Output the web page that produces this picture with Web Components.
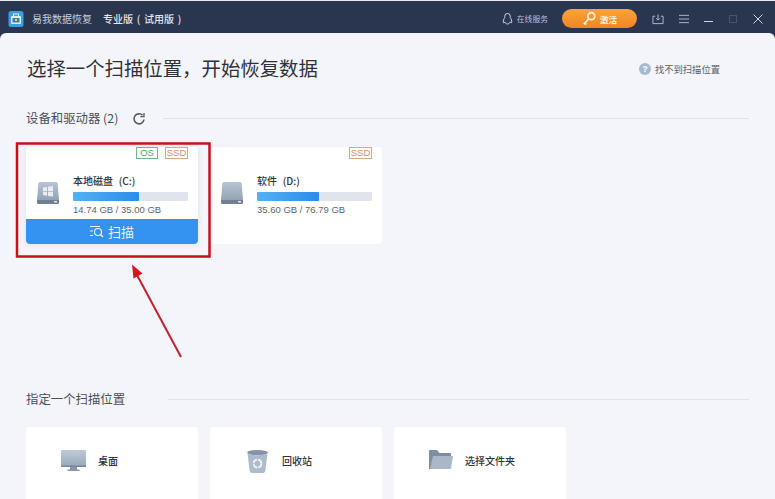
<!DOCTYPE html>
<html lang="zh">
<head>
<meta charset="utf-8">
<title>易我数据恢复</title>
<style>
    html, body { margin: 0; height: 100%; overflow: hidden; background: #f4f5fa; }
    body { font-family: "Noto Sans CJK SC", "Liberation Sans", sans-serif; }
</style>
</head>
<body>

<app-window>
    <title-bar slot="bar"></title-bar>

    <page-head>选择一个扫描位置，开始恢复数据</page-head>

    <section-head style="--top:27px;--rule:17px">设备和驱动器 (2)<refresh-icon slot="extra"></refresh-icon></section-head>
    <card-row style="--top:20px;--height:97px">
        <drive-card name="本地磁盘 (C:)" used="14.74 GB / 35.00 GB" percent="57" os scan></drive-card>
        <drive-card name="软件 (D:)" used="35.60 GB / 76.79 GB" percent="54"></drive-card>
    </card-row>

    <section-head style="--top:146px;--rule:43px">指定一个扫描位置</section-head>
    <card-row style="--top:19px;--height:90px">
        <place-card kind="desktop">桌面</place-card>
        <place-card kind="bin">回收站</place-card>
        <place-card kind="folder" style="--pad:34px">选择文件夹</place-card>
    </card-row>

    <red-callout slot="over"></red-callout>
</app-window>

<script>
const app_window = document.createElement('template');
app_window.innerHTML = `
    <style>
        :host{
            display:block;
            position:relative;
            width:775px;
            height:499px;
            overflow:hidden;
            background:#2a3550;
            border-top:1px solid #e8eaf0;
            box-sizing:border-box;
        }
        .panel{
            height:466px;
            box-sizing:border-box;
            padding:19px 26px 0;
            background:#f4f5fa;
            border-radius:6px 6px 0 0;
        }
    </style>
    <slot name="bar"></slot>
    <div class="panel"><slot></slot></div>
    <slot name="over"></slot>
`;

class AppWindow extends HTMLElement {
    constructor() {
        super();
        this.attachShadow({ mode: 'open' });
        this.shadowRoot.appendChild(app_window.content.cloneNode(true));
    }
}

const title_bar = document.createElement('template');
title_bar.innerHTML = `
    <style>
        :host{
            display:flex;
            align-items:center;
            height:32px;
            box-sizing:border-box;
            padding:3px 12px 0 8px;
            color:#c9ced9;
            font-size:10px;
            background:#2a3550;
        }
        .logo{ width:16px; height:16px; margin-right:8px; }
        .name{ width:71px; white-space:nowrap; }
        .edition{ color:#e3e6ec; font-weight:500; white-space:nowrap; word-spacing:1.500px; }
        .space{ flex:1; }
        .service{ display:flex; align-items:center; gap:4px; margin-right:14px; font-size:7.800px; color:#b9bfcc; }
        .activate{
            display:flex;
            align-items:center;
            gap:4px;
            width:75px;
            height:19px;
            box-sizing:border-box;
            padding-left:20px;
            margin-right:15px;
            border-radius:10px;
            background:linear-gradient(#fba43c,#f08423);
            color:#fff3e2;
            font-size:8.500px;
            font-weight:700;
        }
        .tools{ display:flex; align-items:center; gap:15px; }
        svg{ display:block; }
    </style>
    <svg class="logo" viewBox="0 0 15 16">
        <rect width="15" height="16" rx="2.5" fill="#3a9ee0"/>
        <rect x="2.5" y="5" width="10" height="8" rx="1" fill="#d8ecf4"/>
        <rect x="5" y="3" width="5" height="2.5" fill="none" stroke="#d8ecf4"/>
        <rect x="4" y="7" width="7" height="4.5" fill="#3f7f9c"/>
        <rect x="6.5" y="8" width="2" height="2" fill="#e8d36a"/>
    </svg>
    <span class="name">易我数据恢复</span>
    <span class="edition">专业版 ( 试用版 )</span>
    <span class="space"></span>
    <span class="service">
        <svg width="11" height="13" viewBox="0 0 12 14" fill="none" stroke="#dfe3ea">
            <path d="M3 6V4.500a3 3 0 0 1 6 0V6c1 1.500 2 3.500 1.500 5.500-.6.500-1.300-.1-1.800-.8C8.500 12 7.300 13 6 13s-2.500-1-2.700-2.300c-.5.700-1.200 1.300-1.800.8C1 9.500 2 7.500 3 6z"/>
        </svg>
        在线服务
    </span>
    <span class="activate">
        <svg width="14" height="15" viewBox="0 0 12 13" fill="none" stroke="#fff4e0" stroke-width="1.500">
            <circle cx="8" cy="4.500" r="3"/>
            <path d="M5.800 6.700 1.500 11.500M2.500 10.500l1.200 1.200"/>
        </svg>
        激活
    </span>
    <span class="tools">
        <svg width="12" height="12" viewBox="0 0 13 13" fill="none" stroke="#b9bfcc">
            <path d="M3.500 3.500H1v8h11v-8H9.500M6.500 1.500v6M4.500 5.700l2 2 2-2"/>
        </svg>
        <svg width="10" height="10" viewBox="0 0 11 11" fill="none" stroke="#b9bfcc">
            <path d="M0 1.500h11M0 5.500h11M0 9.500h11"/>
        </svg>
        <svg width="9" height="11" viewBox="0 0 9 11" fill="none" stroke="#cfd3dc">
            <path d="M0 8.500h9"/>
        </svg>
        <svg style="margin-left:1px" width="8" height="8" viewBox="0 0 8 8" fill="none" stroke="#465270">
            <rect x=".5" y=".5" width="7" height="7"/>
        </svg>
        <svg style="margin-left:1px" width="10" height="10" viewBox="0 0 10 10" fill="none" stroke="#cfd3dc">
            <path d="M.5.500l9 9M9.500.500l-9 9"/>
        </svg>
    </span>
`;

class TitleBar extends HTMLElement {
    constructor() {
        super();
        this.attachShadow({ mode: 'open' });
        this.shadowRoot.appendChild(title_bar.content.cloneNode(true));
    }
}

const page_head = document.createElement('template');
page_head.innerHTML = `
    <style>
        :host{
            display:flex;
            align-items:center;
            justify-content:space-between;
            height:30px;
            padding-left:1px;
            color:#2e3238;
        }
        .title{ font-size:19.400px; white-space:nowrap; }
        .help{
            display:flex;
            align-items:center;
            gap:4px;
            margin:4px 29px 0 0;
            font-size:9.300px;
            color:#5b6068;
        }
        .mark{
            width:12px;
            height:12px;
            border-radius:50%;
            background:#a9b9cc;
            color:#fff;
            font:700 9px/12px "Liberation Sans", sans-serif;
            text-align:center;
        }
    </style>
    <span class="title"><slot></slot></span>
    <span class="help"><span class="mark">?</span>找不到扫描位置</span>
`;

class PageHead extends HTMLElement {
    constructor() {
        super();
        this.attachShadow({ mode: 'open' });
        this.shadowRoot.appendChild(page_head.content.cloneNode(true));
    }
}

const section_head = document.createElement('template');
section_head.innerHTML = `
    <style>
        :host{
            display:flex;
            align-items:center;
            height:18px;
            margin-top:var(--top,0);
            font-size:12.400px;
            color:#4b4f56;
            white-space:nowrap;
        }
        .rule{ flex:1; height:1px; margin:1px 0 0 var(--rule,15px); background:#dfe2ea; }
    </style>
    <slot></slot>
    <slot name="extra"></slot>
    <span class="rule"></span>
`;

class SectionHead extends HTMLElement {
    constructor() {
        super();
        this.attachShadow({ mode: 'open' });
        this.shadowRoot.appendChild(section_head.content.cloneNode(true));
    }
}

class RefreshIcon extends HTMLElement {
    constructor() {
        super();
        this.attachShadow({ mode: 'open' });
        this.shadowRoot.innerHTML = `
            <style>
                :host{ display:block; margin:1px 0 0 14px; height:14px; }
            </style>
            <svg width="14" height="14" viewBox="0 0 14 14" fill="none" stroke="#555a62" stroke-width="1.600">
                <path d="M12 7.500A5 5 0 1 1 10.500 3.200"/>
                <path d="M12 1v3.600H8.400" stroke-width="1.300"/>
            </svg>
        `;
    }
}

const card_row = document.createElement('template');
card_row.innerHTML = `
    <style>
        :host{
            display:grid;
            grid-template-columns:repeat(3,172px);
            gap:12px;
            margin-top:var(--top,0);
            height:var(--height,90px);
        }
    </style>
    <slot></slot>
`;

class CardRow extends HTMLElement {
    constructor() {
        super();
        this.attachShadow({ mode: 'open' });
        this.shadowRoot.appendChild(card_row.content.cloneNode(true));
    }
}

const drive_card = document.createElement('template');
drive_card.innerHTML = `
    <style>
        :host{
            display:flex;
            flex-direction:column;
            background:#fff;
            border-radius:4px;
            overflow:hidden;
            color:#2e3238;
        }
        :host([scan]){ box-shadow:0 0 6px rgba(170,185,220,.35); }
        .tags{
            display:flex;
            justify-content:flex-end;
            gap:7px;
            height:12px;
            padding-right:10px;
            font:9.500px/10px "Liberation Sans", sans-serif;
        }
        .tag{ box-sizing:border-box; height:12px; border:1px solid; text-align:center; }
        .os{ width:22px; color:#4fa06c; border-color:#6fb588; }
        .ssd{ width:23px; color:#d08a6a; border-color:#d9a68c; }
        .body{
            flex:1;
            display:flex;
            align-items:flex-start;
            padding:15px 10px 0 11px;
        }
        .disk{ display:block; margin-top:8px; margin-right:14px; flex:none; }
        .info{ flex:1; }
        .name{ font-size:10px; line-height:14px; font-weight:500; white-space:nowrap; word-spacing:3.500px; }
        .bar{ height:9px; margin-top:4px; background:#e0e4ec; overflow:hidden; border-radius:1px; }
        .fill{ height:100%; background:linear-gradient(90deg,#55b1f2,#2c8cea); border-radius:1px; }
        .used{ margin-top:2px; font:9.500px/13px "Liberation Sans", "Noto Sans", sans-serif; color:#5f646c; white-space:nowrap; }
        .scan{
            display:none;
            align-items:center;
            justify-content:center;
            gap:4px;
            height:25px;
            box-sizing:border-box;
            padding-bottom:1px;
            background:#3492f0;
            color:#eaf5ff;
            font-size:13px;
        }
        .scan svg{ display:block; }
        :host([scan]) .scan{ display:flex; }
    </style>
    <div class="tags">
        <span class="tag os">OS</span>
        <span class="tag ssd">SSD</span>
    </div>
    <div class="body">
        <svg class="disk" width="22" height="22" viewBox="0 0 22 22">
            <defs>
                <linearGradient id="disk" x1="0" y1="0" x2="0" y2="1">
                    <stop offset="0" stop-color="#b8c4d4"/>
                    <stop offset="1" stop-color="#94a2b5"/>
                </linearGradient>
            </defs>
            <path d="M3 0h16q1.500 0 1.700 1.500L22 18H0L1.300 1.500Q1.500 0 3 0z" fill="url(#disk)"/>
            <path d="M0 18h22v2.500a1.500 1.500 0 0 1-1.500 1.500h-19A1.500 1.500 0 0 1 0 20.500z" fill="#707e92"/>
            <rect x="17" y="19" width="3" height="1.500" fill="#e4e8ee"/>
            <path class="win" d="M6 5.500l4-.6v4H6zM11 4.700l5-.7v4.900h-5zM6 9.700h4v4l-4-.6zM11 9.700h5v4.900l-5-.7z" fill="#e9edf2"/>
        </svg>
        <div class="info">
            <div class="name"></div>
            <div class="bar"><div class="fill"></div></div>
            <div class="used"></div>
        </div>
    </div>
    <div class="scan">
        <svg width="14" height="13" viewBox="0 0 14 13" fill="none" stroke="#eaf5ff" stroke-width="1.200">
            <path d="M0 1.500h10M0 6h3M0 10.500h3"/>
            <circle cx="8" cy="7" r="3.500"/>
            <path d="M10.500 9.500l2.500 2.500"/>
        </svg>
        <span>扫描</span>
    </div>
`;

class DriveCard extends HTMLElement {
    constructor() {
        super();
        this.attachShadow({ mode: 'open' });
        this.shadowRoot.appendChild(drive_card.content.cloneNode(true));
    }

    connectedCallback() {
        var root = this.shadowRoot;
        root.querySelector('.name').textContent = this.getAttribute('name');
        root.querySelector('.used').textContent = this.getAttribute('used');
        root.querySelector('.fill').style.width = this.getAttribute('percent') + '%';
        if (!this.hasAttribute('os')) {
            root.querySelector('.os').style.display = 'none';
            root.querySelector('.win').style.display = 'none';
        }
    }
}

const place_icons = {
    desktop: `<svg width="25" height="21" viewBox="0 0 25 21">
        <defs><linearGradient id="scr" x1="0" y1="0" x2="0" y2="1"><stop offset="0" stop-color="#c0cbd9"/><stop offset="1" stop-color="#98a6b8"/></linearGradient></defs>
        <rect width="25" height="17" rx="1" fill="url(#scr)"/>
        <rect y="15.500" width="25" height="1.500" fill="#77859a"/>
        <path d="M9 17h7v2.500h2.500V21h-12v-1.500H9z" fill="#8a97a9"/>
    </svg>`,
    bin: `<svg width="21" height="23" viewBox="0 0 20 22">
        <ellipse cx="10" cy="2.500" rx="10" ry="2.500" fill="#8493a7"/>
        <path d="M.5 3.500Q10 6.500 19.500 3.500L17.500 20q-.3 2-2.500 2H5q-2.200 0-2.500-2z" fill="#aebbcb"/>
        <circle cx="10" cy="13" r="3.800" fill="none" stroke="#f2f5f8" stroke-width="1.700" stroke-dasharray="5 1"/>
    </svg>`,
    folder: `<svg width="24" height="19" viewBox="0 0 24 19">
        <path d="M0 1q0-1 1-1h7l2.500 3H21q1 0 1 1v2H0z" fill="#7f8da3"/>
        <path d="M0 3h4v16H0z" fill="#7f8da3"/>
        <path d="M4 6h20l-2 12q-.2 1-1 1H1z" fill="#aab7c8"/>
    </svg>`
};

const place_card = document.createElement('template');
place_card.innerHTML = `
    <style>
        :host{
            display:flex;
            align-items:flex-start;
            background:#fff;
            border-radius:4px;
            padding-top:23px;
            padding-left:var(--pad,35px);
            box-sizing:border-box;
            color:#2e3238;
            font-size:10px;
            font-weight:500;
            line-height:22px;
        }
        .icon{ display:flex; justify-content:center; width:25px; margin-right:12px; }
        svg{ display:block; }
    </style>
    <span class="icon"></span>
    <slot></slot>
`;

class PlaceCard extends HTMLElement {
    constructor() {
        super();
        this.attachShadow({ mode: 'open' });
        this.shadowRoot.appendChild(place_card.content.cloneNode(true));
    }

    connectedCallback() {
        this.shadowRoot.querySelector('.icon').innerHTML = place_icons[this.getAttribute('kind')];
    }
}

// red box and arrow drawn on top of the screenshot
class RedCallout extends HTMLElement {
    constructor() {
        super();
        this.attachShadow({ mode: 'open' });
        this.shadowRoot.innerHTML = `
            <style>
                :host{ position:absolute; left:0; top:-1px; width:775px; height:499px; pointer-events:none; }
                svg{ display:block; }
            </style>
            <svg width="775" height="499" viewBox="0 0 775 499" fill="none">
                <rect x="17" y="143.500" width="192.500" height="113" stroke="#c4121b" stroke-width="2.500"/>
                <path d="M181 357 137 275" stroke="#c0222c" stroke-width="2"/>
                <path d="M132 264.500l1.500 14 9-5z" fill="#dc1420"/>
            </svg>
        `;
    }
}

window.customElements.define('app-window', AppWindow);
window.customElements.define('title-bar', TitleBar);
window.customElements.define('page-head', PageHead);
window.customElements.define('section-head', SectionHead);
window.customElements.define('refresh-icon', RefreshIcon);
window.customElements.define('card-row', CardRow);
window.customElements.define('drive-card', DriveCard);
window.customElements.define('place-card', PlaceCard);
window.customElements.define('red-callout', RedCallout);
</script>
</body>
</html>
